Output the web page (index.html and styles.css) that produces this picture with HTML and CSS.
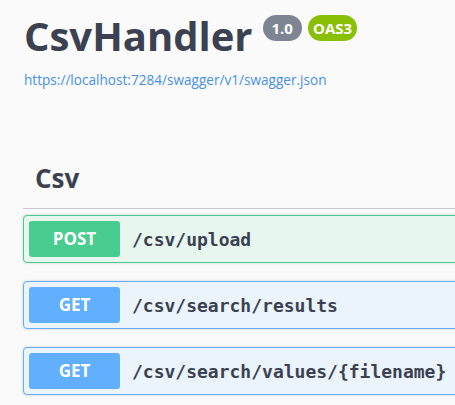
FILE: index.html
```html
<!DOCTYPE html>
<html>
<head>
<meta charset="utf-8">
<link rel="stylesheet" href="styles.css">
</head>
<body>
<div class="page">
  <div class="info">
    <div class="title-row">
      <h1 class="title">CsvHandler</h1>
      <span class="stamp stamp-version">1.0</span>
      <span class="stamp stamp-oas">OAS3</span>
    </div>
    <a class="spec-link" href="#">https://localhost:7284/swagger/v1/swagger.json</a>
  </div>
  <div class="tag-section">
    <h3 class="tag-title">Csv</h3>
    <div class="opblock opblock-post">
      <span class="method">POST</span>
      <span class="path">/csv/upload</span>
    </div>
    <div class="opblock opblock-get">
      <span class="method">GET</span>
      <span class="path">/csv/search/results</span>
    </div>
    <div class="opblock opblock-get">
      <span class="method">GET</span>
      <span class="path">/csv/search/values/{filename}</span>
    </div>
  </div>
</div>
</body>
</html>
```
FILE: styles.css
```css
html, body {
  margin: 0;
  padding: 0;
}
body {
  background: #fafafa;
  font-family: "Open Sans", "Noto Sans", sans-serif;
  color: #3b4151;
  overflow: hidden;
  width: 455px;
  height: 405px;
}
.page {
  width: 520px;
  padding-left: 23px;
}
.info {
  padding-top: 9px;
  padding-left: 1px;
}
.title-row {
  display: flex;
  align-items: flex-start;
}
.title {
  margin: 0;
  font-size: 40px;
  font-weight: 700;
  line-height: 54px;
  color: #3b4151;
}
.stamp {
  margin-top: 6px;
  height: 26px;
  line-height: 26px;
  border-radius: 13px;
  color: #fff;
  font-weight: 700;
  font-size: 15px;
}
.stamp-version {
  margin-left: 10px;
  padding: 0 9px;
  background: #7d8492;
}
.stamp-oas {
  margin-left: 6px;
  padding: 0 5px;
  background: #89bf04;
}
.spec-link {
  display: block;
  margin-top: 8px;
  font-size: 13.6px;
  line-height: 18px;
  color: #4990e2;
  text-decoration: none;
}
.tag-section {
  margin-top: 71px;
}
.tag-title {
  margin: 0;
  padding: 0 0 12px 12px;
  font-size: 26px;
  font-weight: 700;
  line-height: 36px;
  border-bottom: 1px solid #c8c9cc;
}
.opblock {
  display: flex;
  align-items: center;
  margin-top: 6px;
  margin-bottom: 18px;
  padding: 5px;
  border: 1px solid;
  border-radius: 4px;
  box-shadow: 0 0 3px rgba(0,0,0,.19);
}
.opblock + .opblock {
  margin-top: 0;
}
.opblock-post {
  border-color: #49cc90;
  background: #e8f6f0;
}
.opblock-get {
  border-color: #61affe;
  background: #ebf3fb;
}
.method {
  width: 91px;
  height: 36px;
  line-height: 36px;
  text-align: center;
  border-radius: 3px;
  color: #fff;
  font-weight: 700;
  font-size: 17px;
}
.opblock-post .method { background: #49cc90; }
.opblock-get .method { background: #61affe; }
.path {
  margin-left: 12px;
  font-family: "DejaVu Sans Mono", monospace;
  font-weight: 700;
  font-size: 18px;
  color: #3b4151;
}
```
